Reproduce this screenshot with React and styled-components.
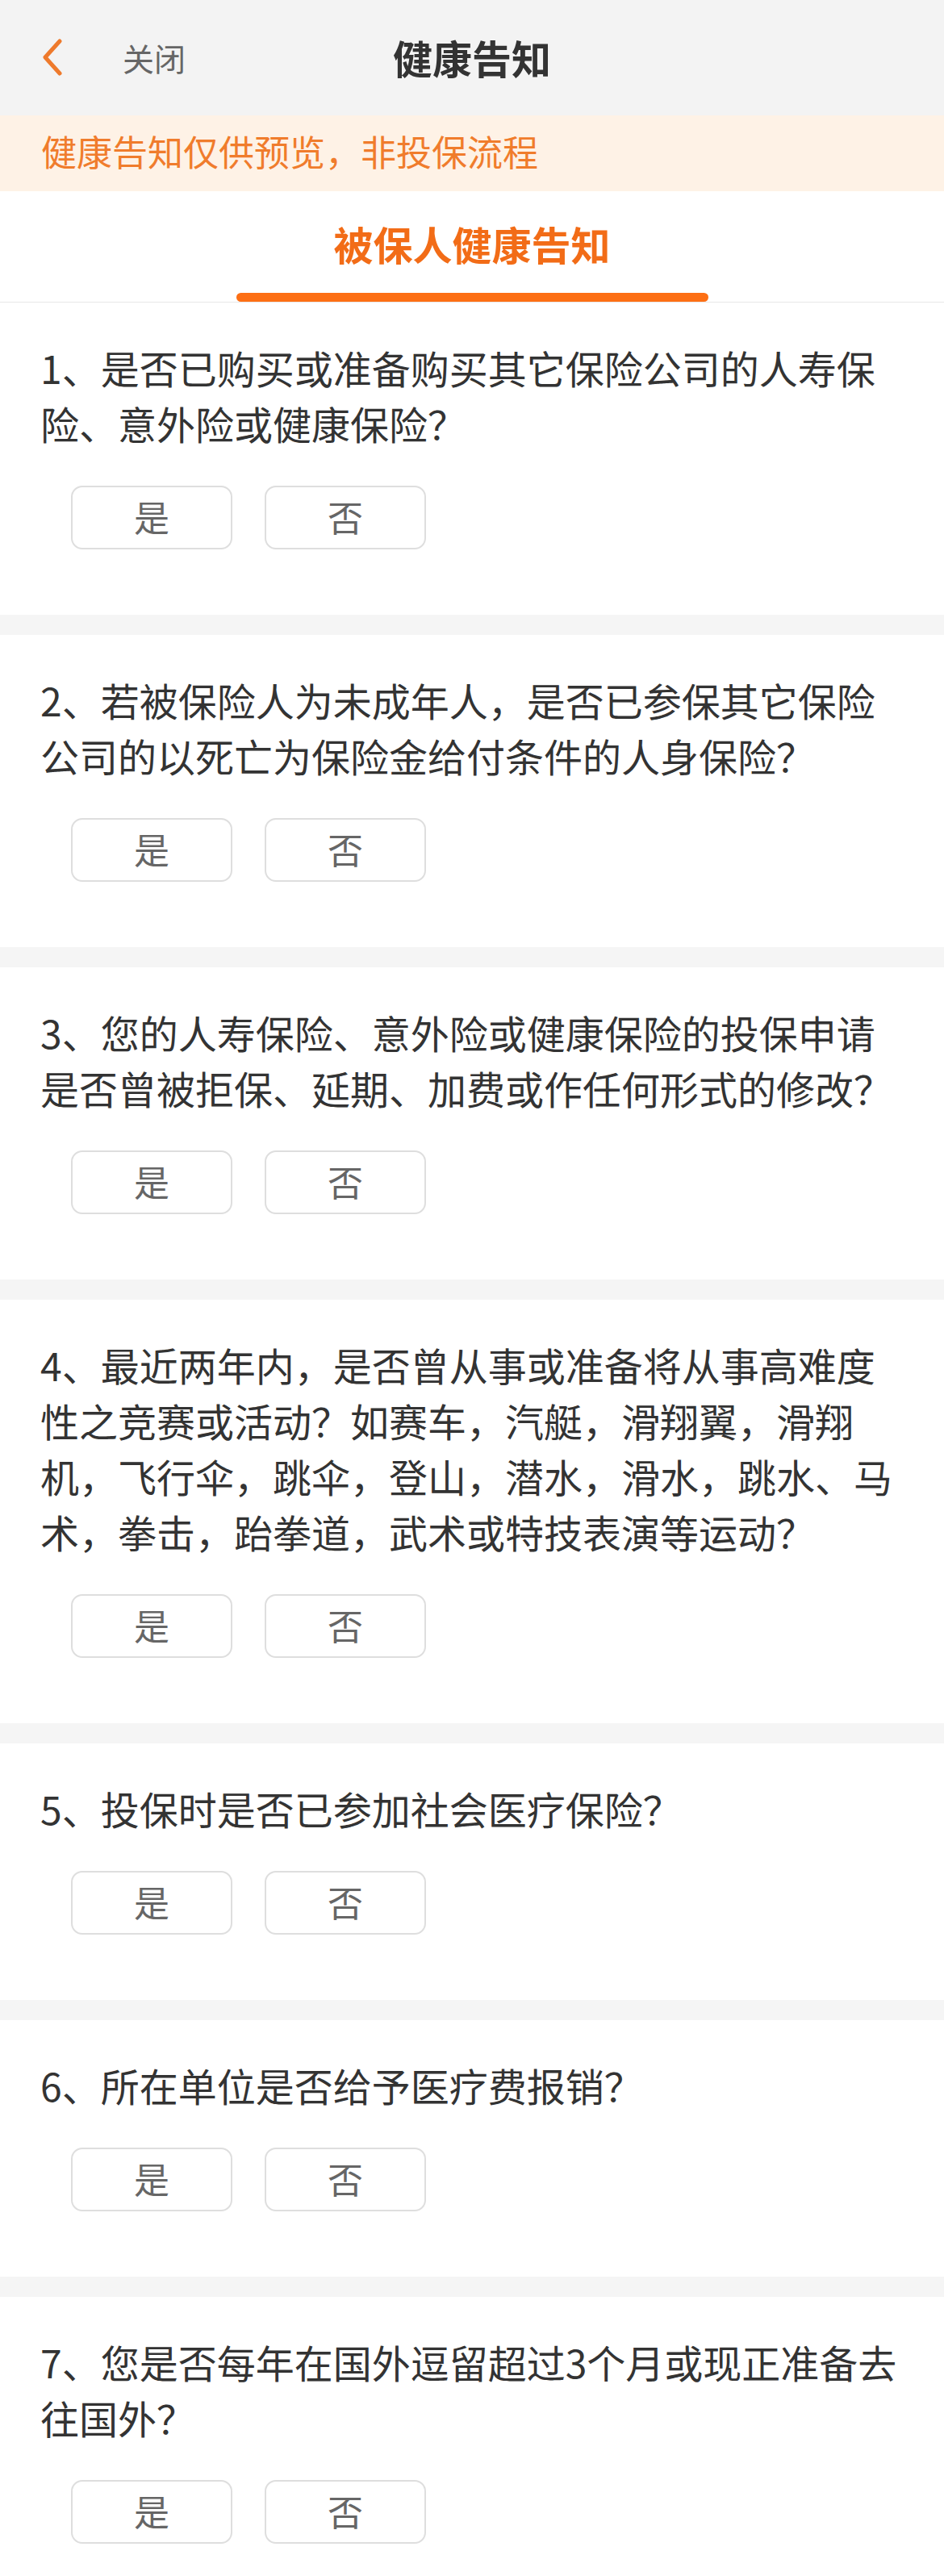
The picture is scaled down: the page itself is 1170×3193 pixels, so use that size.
import styled, {createGlobalStyle} from 'styled-components'

const GlobalStyle = createGlobalStyle`
  body {
    margin: 0;
    background-color: #ffffff;
    font-family: "Noto Sans CJK SC", "Noto Sans", sans-serif;
  }
`

const questions = [
  '1、是否已购买或准备购买其它保险公司的人寿保险、意外险或健康保险？',
  '2、若被保险人为未成年人，是否已参保其它保险公司的以死亡为保险金给付条件的人身保险？',
  '3、您的人寿保险、意外险或健康保险的投保申请是否曾被拒保、延期、加费或作任何形式的修改？',
  '4、最近两年内，是否曾从事或准备将从事高难度性之竞赛或活动？如赛车，汽艇，滑翔翼，滑翔机，飞行伞，跳伞，登山，潜水，滑水，跳水、马术，拳击，跆拳道，武术或特技表演等运动？',
  '5、投保时是否已参加社会医疗保险？',
  '6、所在单位是否给予医疗费报销？',
  '7、您是否每年在国外逗留超过3个月或现正准备去往国外？',
]

const Page = styled.div`
  width: 1170px;
  background-color: #f5f5f5;
`

const NavBar = styled.div`
  height: 143px;
  padding-bottom: 2px;
  box-sizing: border-box;
  background-color: #f3f3f3;
  display: grid;
  grid-template-columns: 1fr auto 1fr;
  align-items: center;
`

const NavLeft = styled.div`
  display: flex;
  align-items: center;
  padding-left: 52px;
`

const CloseText = styled.span`
  margin-left: 74px;
  font-size: 39px;
  color: #666666;
`

const NavTitle = styled.h1`
  margin: 0;
  font-size: 49px;
  font-weight: 700;
  color: #333333;
`

const Notice = styled.div`
  height: 94px;
  padding: 0 51px 6px;
  box-sizing: border-box;
  display: flex;
  align-items: center;
  background-color: #fef2e6;
  color: #f07c2c;
  font-size: 44px;
`

const TabBar = styled.div`
  display: flex;
  flex-direction: column;
  align-items: center;
  padding-top: 34px;
  background-color: #ffffff;
  border-bottom: 1px solid #e8e8e8;
`

const TabLabel = styled.div`
  font-size: 49px;
  line-height: 62px;
  font-weight: 700;
  color: #f26c17;
`

const TabIndicator = styled.div`
  margin-top: 30px;
  width: 585px;
  height: 11px;
  border-radius: 6px;
  background-color: #fd6f14;
`

const QuestionCard = styled.section`
  background-color: #ffffff;
  padding: 46px 50px 81px;
  margin-bottom: 25px;
`

const QuestionText = styled.p`
  margin: 0 0 43px;
  font-size: 48px;
  line-height: 69px;
  color: #333333;
`

const AnswerRow = styled.div`
  display: flex;
  gap: 40px;
  padding-left: 38px;
`

const AnswerButton = styled.button`
  width: 200px;
  height: 79px;
  box-sizing: border-box;
  border: 2px solid #dedede;
  border-radius: 14px;
  background-color: #ffffff;
  font-family: "Noto Sans CJK SC", sans-serif;
  font-size: 44px;
  color: #666666;
  padding: 0 0 4px;
`

const BackIcon = () => (
  <svg width="26" height="46" viewBox="0 0 26 46">
    <path
      d="M22 3 L4 23 L22 43"
      fill="none"
      stroke="#ee7a2c"
      strokeWidth="5"
      strokeLinecap="round"
      strokeLinejoin="round"
    />
  </svg>
)

function App() {
  return (
    <Page>
      <GlobalStyle />
      <NavBar>
        <NavLeft>
          <BackIcon />
          <CloseText>关闭</CloseText>
        </NavLeft>
        <NavTitle>健康告知</NavTitle>
        <div />
      </NavBar>
      <Notice>健康告知仅供预览，非投保流程</Notice>
      <TabBar>
        <TabLabel>被保人健康告知</TabLabel>
        <TabIndicator />
      </TabBar>
      {questions.map(q => (
        <QuestionCard key={q}>
          <QuestionText>{q}</QuestionText>
          <AnswerRow>
            <AnswerButton type="button">是</AnswerButton>
            <AnswerButton type="button">否</AnswerButton>
          </AnswerRow>
        </QuestionCard>
      ))}
    </Page>
  )
}

export default App
